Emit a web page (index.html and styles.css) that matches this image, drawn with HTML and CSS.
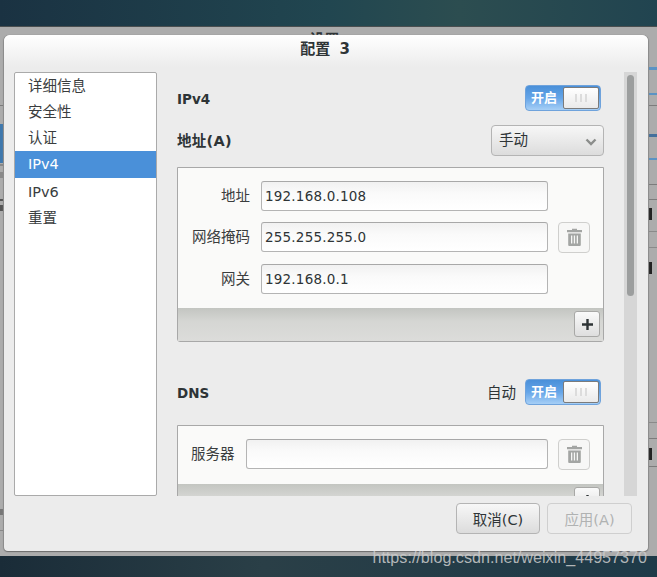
FILE: index.html
```html
<!DOCTYPE html>
<html lang="zh-CN">
<head>
<meta charset="utf-8">
<title>配置 3</title>
<link rel="stylesheet" href="styles.css">
</head>
<body>
<div class="backwin"><div class="backtitle">设置</div></div>
<div class="dialog">
  <header class="dialog-title">配置 3</header>
  <div class="dialog-body">
    <ul class="sidebar">
      <li class="side-item">详细信息</li>
      <li class="side-item">安全性</li>
      <li class="side-item">认证</li>
      <li class="side-item side-selected">IPv4</li>
      <li class="side-item">IPv6</li>
      <li class="side-item">重置</li>
    </ul>
    <main class="content">
      <div class="section-row first-row">
        <span class="strong">IPv4</span>
        <div class="switch"><span class="switch-on">开启</span><span class="thumb"><i></i><i></i><i></i></span></div>
      </div>
      <div class="method-row">
        <span class="strong addr-title">地址(A)</span>
        <div class="select"><span class="select-text">手动</span>
          <svg class="chevron" width="12" height="8" viewBox="0 0 12 8"><path d="M1.5 1.5 6 6l4.5-4.5" fill="none" stroke="#8b8d8b" stroke-width="2.4"/></svg>
        </div>
      </div>
      <section class="panel">
        <div class="panel-inner rows-three">
          <div class="row"><label class="field-label wide">地址</label><div class="input">192.168.0.108</div><div class="slot"></div></div>
          <div class="row"><label class="field-label wide">网络掩码</label><div class="input">255.255.255.0</div>
            <button class="trash"><svg width="15" height="18" viewBox="0 0 15 18"><path d="M5 2V.8h5V2h5v2.2H0V2zM1.2 5.4h12.6V17a1 1 0 0 1-1 1H2.2a1 1 0 0 1-1-1zM4 7.5v8h1.3v-8zm2.8 0v8h1.3v-8zm2.9 0v8H11v-8z" fill="#a3a5a3" fill-rule="evenodd"/></svg></button></div>
          <div class="row row-last"><label class="field-label wide">网关</label><div class="input">192.168.0.1</div><div class="slot"></div></div>
        </div>
        <div class="panel-toolbar">
          <button class="plus"><svg width="11" height="11" viewBox="0 0 11 11"><path d="M4.3 0h2.4v4.3H11v2.4H6.7V11H4.3V6.7H0V4.3h4.3z" fill="#2e3436"/></svg></button>
        </div>
      </section>
      <div class="section-row dns-row">
        <span class="strong">DNS</span>
        <div class="auto-group"><span class="auto-label">自动</span>
          <div class="switch"><span class="switch-on">开启</span><span class="thumb"><i></i><i></i><i></i></span></div>
        </div>
      </div>
      <section class="panel panel-dns">
        <div class="panel-inner">
          <div class="row"><label class="field-label">服务器</label><div class="input"></div>
            <button class="trash"><svg width="15" height="18" viewBox="0 0 15 18"><path d="M5 2V.8h5V2h5v2.2H0V2zM1.2 5.4h12.6V17a1 1 0 0 1-1 1H2.2a1 1 0 0 1-1-1zM4 7.5v8h1.3v-8zm2.8 0v8h1.3v-8zm2.9 0v8H11v-8z" fill="#a3a5a3" fill-rule="evenodd"/></svg></button></div>
        </div>
        <div class="panel-toolbar">
          <button class="plus"><svg width="11" height="11" viewBox="0 0 11 11"><path d="M4.3 0h2.4v4.3H11v2.4H6.7V11H4.3V6.7H0V4.3h4.3z" fill="#2e3436"/></svg></button>
        </div>
      </section>
    </main>
    <div class="scrollbar"><div class="scroll-thumb"></div></div>
  </div>
  <footer class="dialog-footer">
    <button class="action action-cancel">取消(C)</button>
    <button class="action action-disabled">应用(A)</button>
  </footer>
</div>
<div class="watermark">https://blog.csdn.net/weixin_44957370</div>
</body>
</html>
```
FILE: styles.css
```css
* { box-sizing: border-box; }
html, body { margin: 0; padding: 0; }
body {
  width: 657px; height: 577px; overflow: hidden; position: relative;
  font-family: "DejaVu Sans", "Noto Sans CJK SC", sans-serif;
  font-size: 15px; color: #2e3436;
  background:
    linear-gradient(to right, #1a2c38 0%, #2a3f47 40%, #1e3a48 100%) 0 556px / 100% 21px no-repeat,
    linear-gradient(to right, #1a3242 0%, #214650 50%, #2c4d50 70%, #214450 100%) 0 0 / 100% 27px no-repeat,
    #1d3340;
}
.backwin {
  position: absolute; left: 0; top: 26px; width: 657px; height: 530px;
  border-top: 1px solid #4a4f50;
  background:
    linear-gradient(#5b93c4, #5b93c4) 649px 40px / 8px 3px no-repeat,
    linear-gradient(#5b93c4, #5b93c4) 649px 66px / 8px 2px no-repeat,
    linear-gradient(#7c7c7c, #7c7c7c) 649px 78px / 8px 1px no-repeat,
    linear-gradient(#44709c, #44709c) 649px 107px / 8px 3px no-repeat,
    linear-gradient(#5b93c4, #5b93c4) 649px 131px / 8px 2px no-repeat,
    linear-gradient(#7c7c7c, #7c7c7c) 649px 157px / 8px 1px no-repeat,
    linear-gradient(#7c7c7c, #7c7c7c) 649px 172px / 8px 1px no-repeat,
    linear-gradient(#222, #222) 649px 181px / 3px 12px no-repeat,
    linear-gradient(#8a8a8a, #8a8a8a) 649px 204px / 8px 1px no-repeat,
    linear-gradient(#8a8a8a, #8a8a8a) 649px 220px / 8px 1px no-repeat,
    linear-gradient(#222, #222) 649px 235px / 3px 12px no-repeat,
    linear-gradient(#8a8a8a, #8a8a8a) 649px 395px / 8px 1px no-repeat,
    linear-gradient(#7c7c7c, #7c7c7c) 649px 411px / 8px 1px no-repeat,
    linear-gradient(#222, #222) 649px 421px / 3px 12px no-repeat,
    linear-gradient(#7c7c7c, #7c7c7c) 649px 439px / 8px 1px no-repeat,
    linear-gradient(#7c7c7c, #7c7c7c) 0 78px / 3px 1px no-repeat,
    linear-gradient(#3f78ad, #3f78ad) 0 97px / 3px 39px no-repeat,
    linear-gradient(#888, #888) 0 137px / 3px 2px no-repeat,
    linear-gradient(#8a8a8a, #8a8a8a) 0 145px / 3px 6px no-repeat,
    linear-gradient(#555, #555) 0 172px / 3px 2px no-repeat,
    linear-gradient(#555, #555) 0 178px / 3px 6px no-repeat,
    linear-gradient(#777, #777) 0 482px / 3px 6px no-repeat,
    linear-gradient(#888, #888) 0 503px / 3px 1px no-repeat,
    #acacac;
}
.backtitle { height: 8px; overflow: hidden; text-align: center; font-weight: 700; font-size: 15px; line-height: 20px; padding: 3px 8px 0 0; }

.dialog {
  position: absolute; left: 4px; top: 35px; width: 644px; height: 516px;
  display: flex; flex-direction: column;
  border-radius: 6px 6px 4px 4px;
  background: #ececec;
  box-shadow: 0 1px 1px #6c6c6c, 1px 0 1px #909090, -1px 0 1px #909090;
}
.dialog-title {
  height: 37px; flex: none; text-align: center;
  font-weight: 700; font-size: 15px; line-height: 28px; padding-right: 2px; word-spacing: 4px;
  border-radius: 6px 6px 0 0;
  background: linear-gradient(#ffffff, #ececec 32px);
}
.dialog-body { display: flex; height: 424px; flex: none; padding-left: 10px; }
.sidebar {
  list-style: none; margin: 0; padding: 0; width: 143px; flex: none;
  background: #fff; border: 1px solid #aaaaaa; border-radius: 2px;
}
.side-item { height: 26px; line-height: 26px; padding-left: 13px; color: #3a3d3e; font-size: 14.5px; }
.side-selected { height: 27px; margin-bottom: 1px; line-height: 27px; background: #4a90d9; color: #fff; }

.content { width: 427px; margin-left: 20px; flex: none; overflow: hidden; }
.strong { font-weight: 700; font-size: 13.5px; padding-top: 2px; }
.addr-title { font-size: 14.5px; letter-spacing: .3px; padding-top: 0; margin-bottom: 2px; }
.section-row { display: flex; justify-content: space-between; align-items: center; height: 26px; padding-right: 3px; }
.first-row { margin-top: 13px; }
.method-row { display: flex; justify-content: space-between; align-items: center; height: 31px; margin-top: 14px; }
.dns-row { margin-top: 37px; }
.auto-group { display: flex; align-items: center; gap: 9px; }
.auto-label { font-size: 14.5px; margin-bottom: 2px; }

.switch {
  display: flex; align-items: center; justify-content: space-between;
  width: 76px; height: 26px; padding: 1px 1px 1px 5px;
  border: 1px solid #6fa3dc; border-radius: 4px;
  background: linear-gradient(#4a90d9, #65a5e8 50%, #a6cff6);
}
.switch-on { color: #fff; font-weight: 700; font-size: 13px; margin-bottom: 3px; }
.thumb {
  display: flex; justify-content: center; align-items: center; gap: 3px;
  width: 36px; height: 22px; border: 1px solid #7b7b7b; border-radius: 2px;
  background: linear-gradient(#fff, #eaeaea);
}
.thumb i { display: block; width: 2px; height: 8px; background: #dcdcdc; }

.select {
  display: flex; align-items: center; justify-content: space-between;
  width: 113px; height: 31px; padding: 0 6px 0 7px;
  border: 1px solid #b4b4b4; border-radius: 4px;
  background: linear-gradient(#f7f7f7, #dcdcdc);
  font-size: 14.5px;
}
.select-text { margin-bottom: 5px; }
.chevron { margin-top: 3px; }

.panel { margin-top: 11px; border: 1px solid #a8a8a8; border-radius: 0 0 3px 3px; }
.panel-dns { margin-top: 20px; }
.panel-inner { background: #fafaf9; padding: 13px 13px 14px; display: flex; flex-direction: column; gap: 11px; height: 140px; }
.panel-dns .panel-inner { height: 58px; }
.row { display: flex; align-items: center; height: 30px; }
.row-last { margin-top: 1px; }
.field-label { flex: none; font-size: 14.5px; text-align: right; margin: 0 11px 3px 0; color: #3a3d3e; white-space: nowrap; }
.wide { width: 59px; }
.input {
  flex: 1; height: 30px; padding: 0 3px; line-height: 28px;
  font-size: 13.5px; letter-spacing: .2px; color: #2e3436;
  border: 1px solid #b4b4b4; border-top-color: #a8a8a8; border-radius: 3px;
  background: linear-gradient(#f1f1f1, #fafafa 40%, #ffffff);
}
.slot { flex: none; width: 32px; margin-left: 10px; }
.trash {
  flex: none; width: 32px; height: 31px; margin-left: 10px; padding: 0;
  display: flex; align-items: center; justify-content: center;
  border: 1px solid #cfcfcd; border-radius: 4px; background: #f7f7f6;
}
.panel-toolbar {
  height: 33px; display: flex; justify-content: flex-end; padding: 3px 3px 0 0;
  background: linear-gradient(#c3c5c1, #d5d6d3 40%, #dcdcda);
}
.plus {
  width: 26px; height: 26px; padding: 0; display: flex; align-items: center; justify-content: center;
  border: 1px solid #a8a8a6; border-radius: 3px;
  background: linear-gradient(#fafafa, #dedede);
}

.scrollbar { width: 13px; margin-left: 20px; flex: none; background: #d6d6d6; padding: 3px; }
.scroll-thumb { width: 7px; height: 221px; border-radius: 4px; background: #9c9e9e; }

.dialog-footer { display: flex; justify-content: flex-end; gap: 7px; padding: 7px 16px 0 0; }
.action {
  width: 85px; height: 31px; padding: 0;
  font-family: "DejaVu Sans", "Noto Sans CJK SC", sans-serif; font-size: 14.5px; color: #2e3436;
  border: 1px solid #b4b4b4; border-radius: 4px;
  background: linear-gradient(#f7f7f7, #dcdcdc);
}
.action-cancel { width: 84px; }
.action-disabled { color: #b0b2b2; border-color: #cfcfcf; background: #ededed; }

.watermark {
  position: absolute; right: 10px; top: 548px;
  font-family: "Liberation Sans", sans-serif; font-size: 16.15px; line-height: 19px;
  color: rgba(205, 205, 205, .85);
}
```
